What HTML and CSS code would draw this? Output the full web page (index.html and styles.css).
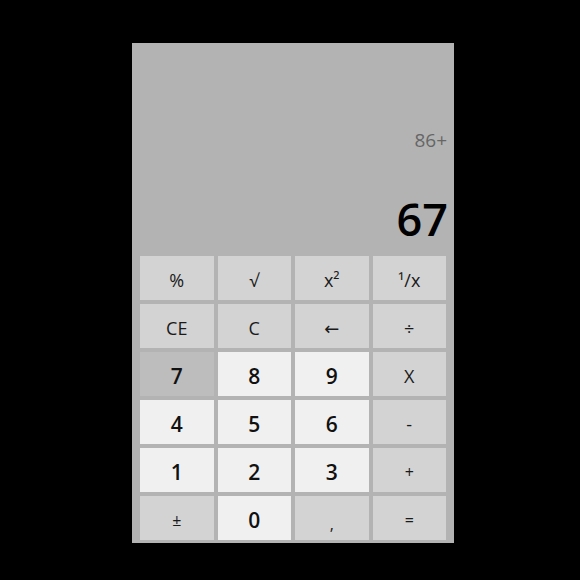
FILE: index.html
```html
<!DOCTYPE html>
<html>
<head>
<meta charset="utf-8">
<link rel="stylesheet" href="styles.css">
</head>
<body>
<div class="calc">
  <div class="display">
    <div class="history">86+</div>
    <div class="result">67</div>
  </div>
  <div class="keys">
    <button class="key fn">%</button>
    <button class="key fn">√</button>
    <button class="key fn">x²</button>
    <button class="key fn">¹/x</button>
    <button class="key fn">CE</button>
    <button class="key fn">C</button>
    <button class="key fn">←</button>
    <button class="key fn">÷</button>
    <button class="key num pressed">7</button>
    <button class="key num">8</button>
    <button class="key num">9</button>
    <button class="key fn">X</button>
    <button class="key num">4</button>
    <button class="key num">5</button>
    <button class="key num">6</button>
    <button class="key fn">-</button>
    <button class="key num">1</button>
    <button class="key num">2</button>
    <button class="key num">3</button>
    <button class="key fn small">+</button>
    <button class="key fn small">±</button>
    <button class="key num">0</button>
    <button class="key fn comma">,</button>
    <button class="key fn small">=</button>
  </div>
</div>
</body>
</html>
```
FILE: styles.css
```css
html, body {
  margin: 0;
  padding: 0;
  background: #000;
}
body {
  width: 580px;
  height: 580px;
}
.calc {
  margin: 43px 0 0 132px;
  width: 322px;
  height: 500px;
  box-sizing: border-box;
  background: #b3b3b3;
  padding: 0 8px 3px 8px;
  display: flex;
  flex-direction: column;
  font-family: "Open Sans", "DejaVu Sans", sans-serif;
}
.display {
  height: 209px;
  box-sizing: border-box;
  display: flex;
  flex-direction: column;
  justify-content: flex-end;
  align-items: flex-end;
  padding: 0 0 5px 0;
  margin: 0 -2px 4px 0;
}
.history {
  font-size: 19px;
  line-height: 24px;
  color: #666;
  margin: 0 1px 39px 0;
}
.result {
  font-size: 45px;
  line-height: 56px;
  font-weight: 600;
  color: #000;
}
.keys {
  display: grid;
  grid-template-columns: repeat(4, 1fr);
  grid-template-rows: repeat(6, 44px);
  gap: 4px;
}
.key {
  border: none;
  margin: 0;
  padding: 3px 0 0 0;
  font-family: "Open Sans", "DejaVu Sans", sans-serif;
  color: #1a1a1a;
  display: flex;
  align-items: center;
  justify-content: center;
}
.fn {
  background: #d3d3d3;
  font-size: 18px;
  font-weight: 400;
}
.fn.small {
  font-size: 16px;
}
.fn.comma {
  font-size: 16px;
  padding-top: 12px;
}
.num {
  background: #f0f0f0;
  font-size: 21px;
  font-weight: 600;
  color: #111;
}
.num.pressed {
  background: #bdbdbd;
}
```
